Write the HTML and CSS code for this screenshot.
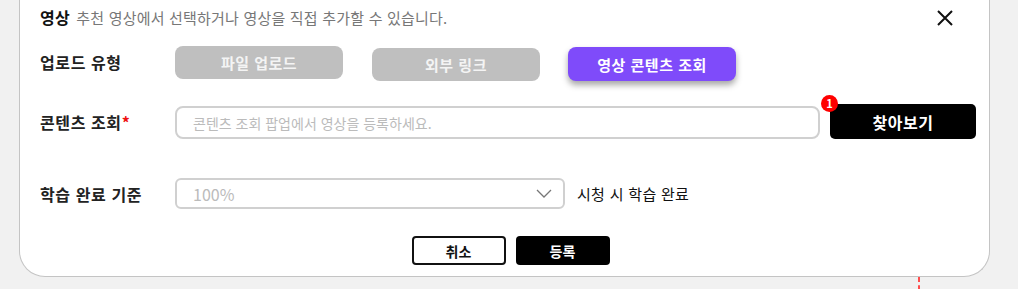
FILE: index.html
```html
<!DOCTYPE html>
<html lang="ko">
<head>
    <meta charset="UTF-8">
    <title>영상 추가</title>
    <link rel="stylesheet" href="styles.css">
</head>
<body>
    <div class="modal">
        <div class="modal-header">
            <p class="title"><strong>영상</strong> 추천 영상에서 선택하거나 영상을 직접 추가할 수 있습니다.</p>
            <button class="close" type="button" aria-label="닫기">
                <svg width="18" height="18" viewBox="0 0 18 18"><path d="M2 2 L16 16 M16 2 L2 16" stroke="#111" stroke-width="2" fill="none"/></svg>
            </button>
        </div>

        <div class="row row-type">
            <label class="row-label">업로드 유형</label>
            <div class="type-list">
                <button type="button" class="type-btn type-file">파일 업로드</button>
                <button type="button" class="type-btn type-link">외부 링크</button>
                <button type="button" class="type-btn type-content active">영상 콘텐츠 조회</button>
            </div>
        </div>

        <div class="row row-content">
            <label class="row-label" for="content">콘텐츠 조회<span class="req">*</span></label>
            <input type="text" id="content" class="text-input" placeholder="콘텐츠 조회 팝업에서 영상을 등록하세요." readonly>
            <div class="search-wrap">
                <span class="badge">1</span>
                <button type="button" class="btn-search">찾아보기</button>
            </div>
        </div>

        <div class="row row-complete">
            <label class="row-label">학습 완료 기준</label>
            <div class="select-box">
                <span class="select-value">100%</span>
                <svg width="16" height="9" viewBox="0 0 16 9"><path d="M1 1 L8 8 L15 1" stroke="#777" stroke-width="1.3" fill="none"/></svg>
            </div>
            <span class="hint">시청 시 학습 완료</span>
        </div>

        <div class="modal-footer">
            <button type="button" class="btn-cancel">취소</button>
            <button type="button" class="btn-submit">등록</button>
        </div>
    </div>
    <div class="guide-line"></div>
</body>
</html>
```

FILE: styles.css
```css
body {
    margin: 0;
    background: #f1f1f1;
    font-family: "Noto Sans CJK KR", "Noto Sans", sans-serif;
    color: #111;
}
.modal {
    margin-left: 19px;
    width: 971px;
    height: 277px;
    box-sizing: border-box;
    background: #fff;
    border: 1px solid #c4c4c4;
    border-top: none;
    border-radius: 0 0 26px 26px;
    padding: 6px 0 0 20px;
}
.modal-header {
    display: flex;
    align-items: center;
    justify-content: space-between;
    height: 22px;
}
.title {
    margin: 0;
    font-size: 15px;
    color: #777;
    line-height: 22px;
    letter-spacing: 0.2px;
}
.title strong {
    font-size: 16px;
    color: #111;
    margin-right: 2px;
}
.close {
    border: none;
    background: none;
    padding: 0;
    margin-right: 35px;
    margin-top: 1px;
    width: 18px;
    height: 18px;
    cursor: pointer;
}
.row {
    display: flex;
    align-items: flex-start;
}
.row-label {
    width: 135px;
    flex-shrink: 0;
    font-size: 16px;
    font-weight: 700;
    color: #222;
    letter-spacing: 0.6px;
}
.req {
    color: #e11;
}
.row-type {
    margin-top: 18px;
    height: 35px;
}
.row-type .row-label {
    line-height: 32px;
}
.type-list {
    display: flex;
    align-items: flex-start;
    gap: 29px;
}
.type-btn {
    width: 168px;
    border: none;
    border-radius: 8px;
    background: #bfbfbf;
    color: #f4f4f4;
    font-family: inherit;
    font-size: 15px;
    font-weight: 600;
    letter-spacing: 0.5px;
    cursor: pointer;
}
.type-file {
    height: 33px;
}
.type-link {
    height: 33px;
    margin-top: 2px;
}
.type-content {
    height: 34px;
    margin-top: 1px;
    margin-left: -1px;
}
.type-btn.active {
    background: #7f4bfa;
    color: #fff;
    box-shadow: 0 4px 6px rgba(0, 0, 0, 0.35);
}
.row-content {
    margin-top: 23px;
    height: 35px;
}
.row-content .row-label {
    line-height: 36px;
}
.text-input {
    width: 645px;
    height: 33px;
    margin-top: 2px;
    box-sizing: border-box;
    border: 2px solid #d0d0d0;
    border-radius: 8px;
    padding: 0 16px;
    font-family: inherit;
    font-size: 14px;
    outline: none;
}
.text-input::placeholder {
    color: #bbb;
}
.search-wrap {
    position: relative;
    margin-left: 10px;
}
.btn-search {
    width: 146px;
    height: 35px;
    border: none;
    border-radius: 5px;
    background: #000;
    color: #fff;
    font-family: inherit;
    font-size: 16px;
    font-weight: 700;
    letter-spacing: 0.5px;
    cursor: pointer;
}
.badge {
    position: absolute;
    left: -9px;
    top: -9px;
    width: 17px;
    height: 17px;
    border-radius: 50%;
    background: #f00;
    color: #fff;
    font-size: 11px;
    font-weight: 700;
    line-height: 17px;
    text-align: center;
}
.row-complete {
    margin-top: 39px;
    height: 31px;
    align-items: center;
}
.select-box {
    width: 390px;
    height: 31px;
    box-sizing: border-box;
    border: 2px solid #d0d0d0;
    border-radius: 6px;
    display: flex;
    align-items: center;
    justify-content: space-between;
    padding: 0 11px 0 16px;
}
.select-value {
    font-size: 16px;
    color: #bbb;
}
.hint {
    margin-left: 12px;
    font-size: 15px;
    color: #111;
    letter-spacing: 0.3px;
}
.modal-footer {
    display: flex;
    justify-content: center;
    gap: 10px;
    margin-top: 27px;
    padding-right: 8px;
}
.btn-cancel,
.btn-submit {
    width: 94px;
    height: 29px;
    border-radius: 4px;
    font-family: inherit;
    font-size: 14px;
    font-weight: 700;
    cursor: pointer;
}
.btn-cancel {
    background: #fff;
    border: 2px solid #111;
    color: #111;
}
.btn-submit {
    background: #000;
    border: none;
    color: #fff;
}
.guide-line {
    margin-left: 918px;
    width: 0;
    height: 13px;
    border-left: 2px dashed #ff4d4d;
}
```
